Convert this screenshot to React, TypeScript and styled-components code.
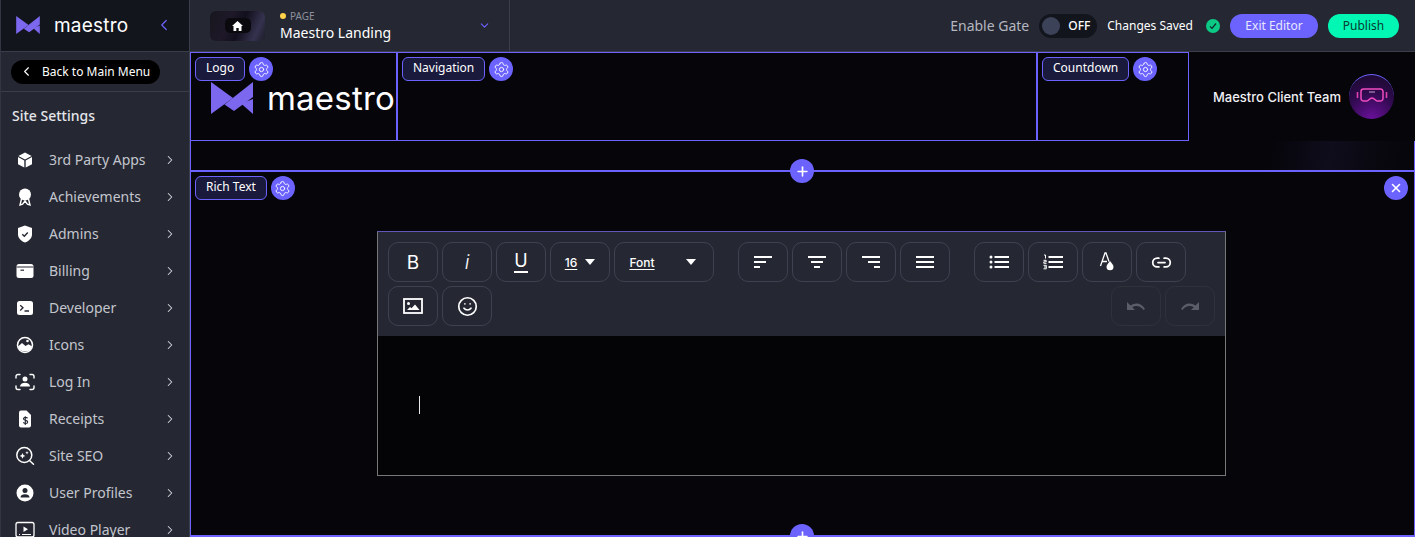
import React from "react";
import styled, { createGlobalStyle } from "styled-components";
import { ChevronLeft, ChevronRight, ChevronDown, Settings, Plus, X, Link2, Smile } from "lucide-react";

const accent = "#6c63ff";
const line = "#3a3d4a";

const Global = createGlobalStyle`
  html, body { margin: 0; padding: 0; background: #05050a; }
  * { box-sizing: border-box; }
  #root { width: 1415px; height: 537px; overflow: hidden; }
`;

const Page = styled.div`
  display: flex;
  width: 1415px;
  height: 537px;
  overflow: hidden;
  font-family: "Noto Sans", sans-serif;
  color: #fff;
`;
const Sidebar = styled.aside`
  flex: 0 0 190px;
  display: flex;
  flex-direction: column;
  height: 537px;
  overflow: hidden;
  background: #252833;
  border-right: 1px solid ${line};
  border-left: 1px solid #333642;
`;
const Brand = styled.div`
  flex: 0 0 52px;
  display: flex;
  align-items: center;
  gap: 14px;
  padding: 0 16px 1px 15px;
  background: #13151d;
  border-bottom: 1px solid ${line};
`;
const BrandWord = styled.span<{ $size: number }>`
  font-family: Inter, sans-serif;
  font-size: ${(p) => p.$size}px;
  font-weight: 400;
  line-height: 1;
  color: #fff;
  letter-spacing: 0.2px;
`;
const Collapse = styled.span`
  display: flex;
  margin-left: auto;
  color: ${accent};
`;
const BackRow = styled.div`
  flex: 0 0 40px;
  display: flex;
  align-items: center;
  padding: 0 0 0 10px;
  border-bottom: 1px solid ${line};
`;
const BackPill = styled.div`
  display: flex;
  align-items: center;
  gap: 8px;
  width: 149px;
  height: 24px;
  padding-left: 8px;
  border-radius: 12px;
  background: #000;
  font-size: 12px;
  font-weight: 400;
`;
const SideTitle = styled.div`
  flex: 0 0 48px;
  display: flex;
  align-items: center;
  padding: 0 0 2px 11px;
  font-size: 14px;
  font-weight: 500;
  color: #e4e5ea;
`;
const Menu = styled.nav`
  display: flex;
  flex-direction: column;
  padding-top: 1px;
`;
const MenuRow = styled.div`
  flex: 0 0 37px;
  display: flex;
  align-items: center;
  gap: 12px;
  padding: 0 12px 0 12px;
  font-size: 14px;
  color: #c3c5cd;
`;
const MenuIcon = styled.svg`
  flex: 0 0 24px;
  width: 24px;
  height: 24px;
  color: #fff;
`;
const MenuChevron = styled.span`
  display: flex;
  margin-left: auto;
  color: #d8d9df;
`;
const Main = styled.main`
  flex: 1;
  display: flex;
  flex-direction: column;
  min-width: 0;
`;
const Topbar = styled.header`
  flex: 0 0 52px;
  display: flex;
  align-items: center;
  background: #252833;
  border-bottom: 1px solid ${line};
`;
const PagePicker = styled.div`
  flex: 0 0 320px;
  height: 51px;
  display: flex;
  align-items: center;
  padding: 0 18px 0 20px;
  border-right: 1px solid ${line};
`;
const Thumb = styled.div`
  flex: 0 0 55px;
  height: 30px;
  display: flex;
  align-items: center;
  justify-content: center;
  border-radius: 6px;
  background: linear-gradient(115deg, #17171d 0%, #1e1829 35%, #120f1d 55%, #35324f 82%, #1c1b27 100%);
`;
const HomeBadge = styled.div`
  width: 26px;
  height: 15px;
  display: flex;
  align-items: center;
  justify-content: center;
  border-radius: 5px;
  background: #0a0a0e;
`;
const PageInfo = styled.div`
  display: flex;
  flex-direction: column;
  margin-left: 15px;
`;
const PageKind = styled.div`
  display: flex;
  align-items: center;
  gap: 4px;
  height: 13px;
  font-size: 10px;
  color: #8d909c;
`;
const Dot = styled.i`
  width: 6px;
  height: 6px;
  border-radius: 50%;
  background: #ffd24a;
`;
const PageName = styled.div`
  font-size: 14px;
  line-height: 19px;
  font-weight: 400;
`;
const PickerChevron = styled.span`
  display: flex;
  margin-left: auto;
  color: ${accent};
`;
const TopActions = styled.div`
  flex: 1;
  display: flex;
  align-items: center;
  justify-content: flex-end;
  padding-right: 16px;
`;
const GateLabel = styled.span`
  font-size: 14px;
  color: #b5b7c0;
  margin-right: 10px;
`;
const Toggle = styled.div`
  width: 58px;
  height: 24px;
  display: flex;
  align-items: center;
  gap: 8px;
  padding-left: 3px;
  border-radius: 12px;
  background: #13151d;
  font-size: 12px;
  font-weight: 500;
  margin-right: 10px;
`;
const Knob = styled.i`
  width: 18px;
  height: 18px;
  border-radius: 50%;
  background: #3c4358;
`;
const Saved = styled.span`
  font-size: 12px;
  font-weight: 400;
  margin-right: 13px;
`;
const SavedCheck = styled.span`
  width: 14px;
  height: 14px;
  display: flex;
  align-items: center;
  justify-content: center;
  border-radius: 50%;
  background: #0cc985;
  margin-right: 10px;
`;
const Pill = styled.button<{ $bg: string; $fg: string; $w: number }>`
  width: ${(p) => p.$w}px;
  height: 24px;
  border: 0;
  padding: 0;
  border-radius: 12px;
  background: ${(p) => p.$bg};
  color: ${(p) => p.$fg};
  font-family: "Noto Sans", sans-serif;
  font-size: 12px;
  font-weight: 400;
  & + & { margin-left: 10px; }
`;
const Canvas = styled.div`
  flex: 1;
  display: flex;
  flex-direction: column;
  background: #05050a;
  min-height: 0;
`;
const HeaderRow = styled.div`
  flex: 0 0 89px;
  display: flex;
`;
const Cell = styled.div<{ $w: number }>`
  position: relative;
  flex: 0 0 ${(p) => p.$w}px;
  display: flex;
  align-items: center;
  border: 1px solid ${accent};
`;
const LogoBody = styled.div`
  display: flex;
  align-items: center;
  gap: 14px;
  padding: 0 0 0 20px;
  margin-top: 3px;
  white-space: nowrap;
`;
const Team = styled.div`
  flex: 1;
  display: flex;
  align-items: center;
  justify-content: flex-end;
  gap: 8px;
  padding-right: 21px;
  font-family: Inter, sans-serif;
  font-size: 13px;
  font-weight: 500;
  color: #f0f0f4;
`;
const Avatar = styled.div`
  width: 45px;
  height: 45px;
  display: flex;
  align-items: center;
  justify-content: center;
  border-radius: 50%;
  background: radial-gradient(circle at 50% 100%, #6a109a 0%, #2e0a4c 55%, #180a2a 100%);
  border-top: 1px solid ${accent};
`;
const Strip = styled.div`
  position: relative;
  flex: 0 0 31px;
  border-left: 1px solid ${accent};
  border-right: 1px solid ${accent};
  border-bottom: 2px solid ${accent};
  background: linear-gradient(100deg, #05050a 0%, #05050a 88%, #0f0d1c 93%, #09080f 97%, #05050a 100%);
`;
const Section = styled.section`
  position: relative;
  flex: 1;
  display: flex;
  flex-direction: column;
  align-items: center;
  padding: 59px 2px 0 0;
  border-left: 1px solid ${accent};
  border-right: 1px solid ${accent};
  border-bottom: 2px solid ${accent};
  min-height: 0;
`;
const Label = styled.div`
  position: absolute;
  top: 4px;
  left: 4px;
  display: flex;
  align-items: center;
  gap: 4px;
  z-index: 2;
`;
const Tag = styled.span`
  height: 24px;
  display: flex;
  align-items: center;
  padding: 0 10px 2px;
  border: 1px solid ${accent};
  border-radius: 6px;
  background: #1a1a3c;
  font-size: 12px;
  line-height: 1;
  white-space: nowrap;
`;
const Round = styled.span`
  width: 24px;
  height: 24px;
  flex: 0 0 24px;
  display: flex;
  align-items: center;
  justify-content: center;
  border-radius: 50%;
  background: ${accent};
  color: #fff;
`;
const AddButton = styled(Round)`
  position: absolute;
  left: 599px;
  bottom: -13px;
  z-index: 3;
`;
const CloseButton = styled(Round)`
  position: absolute;
  top: 4px;
  right: 6px;
`;
const Editor = styled.div`
  width: 849px;
  height: 245px;
  display: flex;
  flex-direction: column;
  border: 1px solid #777;
  border-top-color: #5f58b8;
`;
const Toolbar = styled.div`
  flex: 0 0 104px;
  display: flex;
  flex-wrap: wrap;
  align-content: flex-start;
  gap: 4px;
  padding: 10px;
  background: #252833;
`;
const Tool = styled.button<{ $w?: number; $gapAfter?: boolean; $dim?: boolean; $push?: boolean }>`
  flex: 0 0 ${(p) => p.$w ?? 50}px;
  height: 40px;
  display: flex;
  align-items: center;
  justify-content: center;
  gap: 8px;
  padding: 0;
  border: 1px solid ${(p) => (p.$dim ? "#2f323d" : "#3e4250")};
  border-radius: 10px;
  background: transparent;
  color: ${(p) => (p.$dim ? "#5b5e69" : "#fff")};
  font-family: Inter, sans-serif;
  margin-right: ${(p) => (p.$gapAfter ? 20 : 0)}px;
  margin-left: ${(p) => (p.$push ? "auto" : 0)};
`;
const Bold = styled.span`
  font-size: 19px;
  font-weight: 400;
`;
const Italic = styled.span`
  font-size: 20px;
  font-style: italic;
  font-weight: 300;
`;
const Under = styled.span`
  font-size: 18px;
  line-height: 20px;
  border-bottom: 2px solid #fff;
  font-weight: 400;
`;
const Small = styled.span`
  font-size: 12px;
  font-weight: 500;
  text-decoration: underline;
  text-underline-offset: 2px;
`;
const FontName = styled(Small)`
  margin: 0 23px 0 -3px;
`;
const Caret = styled.i`
  width: 0;
  height: 0;
  border-left: 5px solid transparent;
  border-right: 5px solid transparent;
  border-top: 6px solid #fff;
`;
const Body = styled.div`
  flex: 1;
  padding: 60px 41px;
  background: #040406;
`;
const TextCursor = styled.div`
  width: 1px;
  height: 18px;
  background: #e8e8e8;
`;

const Mark = ({ w, h }: { w: number; h: number }) => (
  <svg width={w} height={h} viewBox="0 0 42 32" style={{ flex: `0 0 ${w}px` }}>
    <path fill="#7b68ee" d="M0 0 L22 16 L0 32 Z" />
    <path fill="#7b68ee" d="M42 0 V15 L23 29 L13.5 22.500 Z" />
    <path fill="#7b68ee" d="M42 32 L30 21.500 L42 17 Z" />
  </svg>
);

const Gear = () => <Settings size={17} strokeWidth={1.3} />;

const icons: Record<string, React.ReactNode> = {
  cube: (
    <>
      <path fill="currentColor" d="M12 4.500 18.600 8 12 11.500 5.400 8Z" />
      <path fill="currentColor" d="M5 9 11.300 12.400V19.600L5 16.200Z" />
      <path fill="currentColor" d="M19 9 12.700 12.400V19.600L19 16.200Z" />
    </>
  ),
  award: (
    <>
      <circle cx="12" cy="9.500" r="6" fill="currentColor" />
      <path fill="none" stroke="currentColor" strokeWidth="1.400" d="M8.500 14 7 20l2.600-.8L12 16l2.400 3.200L17 20l-1.500-6" />
    </>
  ),
  shield: (
    <>
      <path fill="currentColor" d="M12 3.500 19 6v6.200c0 4-3 6.900-7 8.300-4-1.400-7-4.300-7-8.300V6Z" />
      <path fill="none" stroke="#252833" strokeWidth="1.400" d="M9.300 12.300l2 2 3.500-3.800" />
    </>
  ),
  card: (
    <>
      <rect x="3.500" y="5" width="17" height="14" rx="2.500" fill="currentColor" />
      <path stroke="#252833" strokeWidth="1" d="M3.500 8h17" />
      <path stroke="#252833" strokeWidth="1.200" d="M7.500 11.200h3.500" />
    </>
  ),
  terminal: (
    <>
      <rect x="4" y="5" width="16" height="14" rx="2.500" fill="currentColor" />
      <path fill="none" stroke="#252833" strokeWidth="1.300" d="M7.200 9.200l2.800 2.600-2.800 2.600M11.500 15h4.500" />
    </>
  ),
  picture: (
    <>
      <circle cx="12" cy="12" r="7.500" fill="none" stroke="currentColor" strokeWidth="1.500" />
      <path fill="currentColor" d="M5 13.500 9 10l3.500 3 3-1.800 3.700 2.300A7.500 7.500 0 0 1 5 13.500Z" />
      <circle cx="14.500" cy="8" r="1.300" fill="currentColor" />
    </>
  ),
  login: (
    <>
      <path fill="none" stroke="currentColor" strokeWidth="1.400" strokeLinecap="round" d="M3 8V6.500A2 2 0 0 1 5 4.500h2M17 4.500h2a2 2 0 0 1 2 2V8M21 16v1.500a2 2 0 0 1-2 2h-2M7 19.500H5a2 2 0 0 1-2-2V16" />
      <circle cx="12" cy="9" r="2.500" fill="currentColor" />
      <path fill="currentColor" d="M7 16.500c0-2.500 2.200-3.800 5-3.800s5 1.300 5 3.800Z" />
    </>
  ),
  receipt: (
    <>
      <path fill="currentColor" d="M8 3.500h5.500L18 8v10.500a2 2 0 0 1-2 2H8a2 2 0 0 1-2-2v-13a2 2 0 0 1 2-2Z" />
      <path fill="none" stroke="#252833" strokeWidth="1.100" d="M14.600 11.300c-.5-.7-1.400-1-2.400-.9-1 .1-1.800.7-1.700 1.600.1 1.800 4.200 1 4.200 3 0 .9-.9 1.500-2 1.500-1 0-1.900-.4-2.400-1.100M12.300 9.300v8.800" />
    </>
  ),
  seo: (
    <>
      <circle cx="11.300" cy="11" r="7.500" fill="none" stroke="currentColor" strokeWidth="1.500" />
      <path stroke="currentColor" strokeWidth="1.500" strokeLinecap="round" d="M17 17l3.500 3.300" />
      <path fill="currentColor" d="M9.500 9l.9 2 2 .9-2 .9-.9 2-.9-2-2-.9 2-.9ZM14 7l.5 1.200 1.200.5-1.200.5-.5 1.200-.5-1.200-1.200-.5 1.200-.5Z" />
    </>
  ),
  user: (
    <>
      <circle cx="12" cy="12" r="8.500" fill="currentColor" />
      <circle cx="12" cy="9.500" r="2.500" fill="#252833" />
      <path fill="#252833" d="M7.500 16.500c0-2.300 2-3.300 4.500-3.300s4.500 1 4.500 3.300Z" />
    </>
  ),
  video: (
    <>
      <rect x="3" y="4.500" width="18" height="14.500" rx="2" fill="none" stroke="currentColor" strokeWidth="1.300" />
      <path fill="currentColor" d="M10.500 8.500l4.500 2.800-4.500 2.800Z" />
      <path stroke="currentColor" strokeWidth="1.100" d="M6 16.500h1M9 16.500h9" />
    </>
  ),
};

const menu: [string, string][] = [
  ["cube", "3rd Party Apps"],
  ["award", "Achievements"],
  ["shield", "Admins"],
  ["card", "Billing"],
  ["terminal", "Developer"],
  ["picture", "Icons"],
  ["login", "Log In"],
  ["receipt", "Receipts"],
  ["seo", "Site SEO"],
  ["user", "User Profiles"],
  ["video", "Video Player"],
];

const Lines = ({ d }: { d: string }) => (
  <svg width="20" height="14" viewBox="0 0 20 14">
    <path stroke="currentColor" strokeWidth="2" fill="none" d={d} />
  </svg>
);

const BulletIcon = () => (
  <svg width="20" height="14" viewBox="0 0 20 14" fill="none">
    <path stroke="currentColor" strokeWidth="2" d="M5.500 2H20M5.500 7H20M5.500 12H20" />
    <circle cx="2" cy="2" r="1.500" fill="currentColor" />
    <circle cx="2" cy="7" r="1.500" fill="currentColor" />
    <circle cx="2" cy="12" r="1.500" fill="currentColor" />
  </svg>
);
const NumberIcon = () => (
  <svg width="20" height="16" viewBox="0 0 20 16" fill="none">
    <path stroke="currentColor" strokeWidth="2" d="M5.500 3H20M5.500 8H20M5.500 13H20" />
    <path stroke="currentColor" strokeWidth="1" d="M1 1h1.500v3.500M.5 6.300h2.700v1.500H.8v1.500h2.700M.5 11.300h2.800v3.500H.5M1 13h2" />
  </svg>
);
const ColorIcon = () => (
  <svg width="20" height="22" viewBox="0 0 20 22" fill="none">
    <path stroke="currentColor" strokeWidth="1.300" d="M3.500 15 8 2h1l3 8.500M5.200 10.500H10" />
    <path fill="currentColor" d="M13 10c2 2.500 3.500 4 3.500 5.800a3.500 3.500 0 0 1-7 0c0-1.800 1.500-3.300 3.500-5.800Z" />
  </svg>
);
const ImageIcon = () => (
  <svg width="20" height="16" viewBox="0 0 20 16" fill="none">
    <rect x="1" y="1" width="18" height="14" stroke="currentColor" strokeWidth="1.800" />
    <circle cx="5.500" cy="5.500" r="1.500" fill="currentColor" />
    <path fill="currentColor" d="M4 12l3-3 1.500 1.300L12 6.500 16.500 12Z" />
  </svg>
);
const Undo = ({ flip }: { flip?: boolean }) => (
  <svg width="20" height="12" viewBox="0 0 20 12" style={flip ? { transform: "scaleX(-1)" } : undefined}>
    <path fill="currentColor" d="M1 2v8h8L6.200 7.300C9.500 5 14.500 5.600 17.500 10L19 9C16 3 9.500 1.800 4.500 5.500Z" />
  </svg>
);

const App = () => (
  <Page>
    <Global />
    <Sidebar>
      <Brand>
        <Mark w={24} h={18} />
        <BrandWord $size={19}>maestro</BrandWord>
        <Collapse><ChevronLeft size={18} strokeWidth={1.6} /></Collapse>
      </Brand>
      <BackRow>
        <BackPill>
          <ChevronLeft size={15} strokeWidth={1.8} />
          Back to Main Menu
        </BackPill>
      </BackRow>
      <SideTitle>Site Settings</SideTitle>
      <Menu>
        {menu.map(([icon, name]) => (
          <MenuRow key={name}>
            <MenuIcon viewBox="0 0 24 24">{icons[icon]}</MenuIcon>
            {name}
            <MenuChevron><ChevronRight size={14} strokeWidth={1.8} /></MenuChevron>
          </MenuRow>
        ))}
      </Menu>
    </Sidebar>
    <Main>
      <Topbar>
        <PagePicker>
          <Thumb>
            <HomeBadge>
              <svg width="11" height="10" viewBox="0 0 11 10">
                <path fill="#fff" d="M5.500 0 11 5H9.500v5H6.700V7H4.300v3H1.500V5H0Z" />
              </svg>
            </HomeBadge>
          </Thumb>
          <PageInfo>
            <PageKind><Dot />PAGE</PageKind>
            <PageName>Maestro Landing</PageName>
          </PageInfo>
          <PickerChevron><ChevronDown size={13} strokeWidth={2} /></PickerChevron>
        </PagePicker>
        <TopActions>
          <GateLabel>Enable Gate</GateLabel>
          <Toggle><Knob />OFF</Toggle>
          <Saved>Changes Saved</Saved>
          <SavedCheck>
            <svg width="8" height="8" viewBox="0 0 8 8">
              <path d="M1 4.300 3 6.300 7 1.500" fill="none" stroke="#12262a" strokeWidth="1.200" />
            </svg>
          </SavedCheck>
          <Pill $bg="#6c63ff" $fg="#e8e6ff" $w={88}>Exit Editor</Pill>
          <Pill $bg="#02f7b5" $fg="#083a30" $w={71}>Publish</Pill>
        </TopActions>
      </Topbar>
      <Canvas>
        <HeaderRow>
          <Cell $w={207}>
            <Label><Tag>Logo</Tag><Round><Gear /></Round></Label>
            <LogoBody>
              <Mark w={42} h={32} />
              <BrandWord $size={33}>maestro</BrandWord>
            </LogoBody>
          </Cell>
          <Cell $w={640}>
            <Label><Tag>Navigation</Tag><Round><Gear /></Round></Label>
          </Cell>
          <Cell $w={152}>
            <Label><Tag>Countdown</Tag><Round><Gear /></Round></Label>
          </Cell>
          <Team>
            Maestro Client Team
            <Avatar>
              <svg width="34" height="18" viewBox="0 0 34 18" fill="none">
                <path stroke="#f04cc0" strokeWidth="1.500" d="M6 3.500A2.500 2.500 0 0 1 8.500 1h17A2.500 2.500 0 0 1 28 3.500v7a2.500 2.500 0 0 1-2.500 2.500H22c-1.500 0-2.500-3-5-3s-3.500 3-5 3H8.500A2.500 2.500 0 0 1 6 10.500Z" />
                <path stroke="#e040b0" strokeWidth="1.600" d="M2.500 4v6M31.500 4v6" />
                <path stroke="#c9a0d0" strokeWidth="1" d="M14 4h6" />
              </svg>
            </Avatar>
          </Team>
        </HeaderRow>
        <Strip>
          <AddButton><Plus size={15} strokeWidth={2.6} /></AddButton>
        </Strip>
        <Section>
          <Label><Tag>Rich Text</Tag><Round><Gear /></Round></Label>
          <CloseButton><X size={14} strokeWidth={2.8} /></CloseButton>
          <Editor>
            <Toolbar>
              <Tool><Bold>B</Bold></Tool>
              <Tool><Italic>i</Italic></Tool>
              <Tool><Under>U</Under></Tool>
              <Tool $w={60}><Small>16</Small><Caret /></Tool>
              <Tool $w={100} $gapAfter><FontName>Font</FontName><Caret /></Tool>
              <Tool><Lines d="M1 2H19M1 7H13M1 12H7" /></Tool>
              <Tool><Lines d="M1 2H19M4 7H16M7 12H13" /></Tool>
              <Tool><Lines d="M1 2H19M7 7H19M13 12H19" /></Tool>
              <Tool $gapAfter><Lines d="M1 2H19M1 7H19M1 12H19" /></Tool>
              <Tool><BulletIcon /></Tool>
              <Tool><NumberIcon /></Tool>
              <Tool><ColorIcon /></Tool>
              <Tool><Link2 size={21} strokeWidth={2} /></Tool>
              <Tool><ImageIcon /></Tool>
              <Tool><Smile size={21} strokeWidth={1.9} /></Tool>
              <Tool $dim $push><Undo /></Tool>
              <Tool $dim><Undo flip /></Tool>
            </Toolbar>
            <Body><TextCursor /></Body>
          </Editor>
          <AddButton><Plus size={15} strokeWidth={2.6} /></AddButton>
        </Section>
      </Canvas>
    </Main>
  </Page>
);

export default App;
